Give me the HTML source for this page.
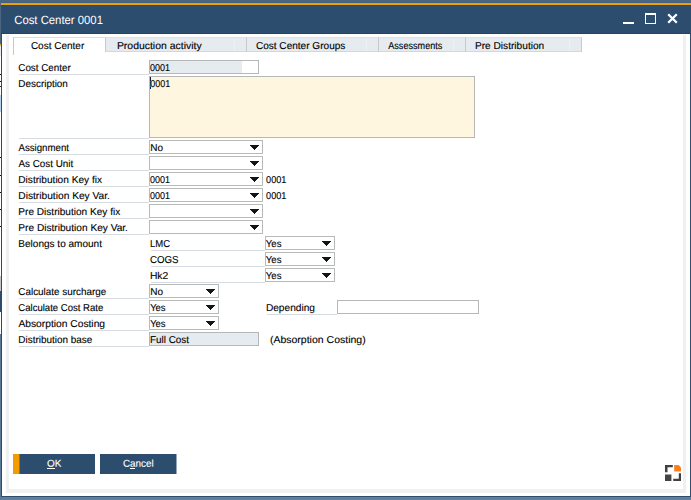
<!DOCTYPE html>
<html lang="en">
<head>
<meta charset="utf-8">
<title>Cost Center 0001</title>
<style>
html,body{margin:0;padding:0;}
body{width:691px;height:500px;overflow:hidden;position:relative;background:#fff;
 font-family:"Liberation Sans",sans-serif;font-size:10px;color:#000;}
.b{position:absolute;display:block;}
.t{position:absolute;white-space:nowrap;line-height:14px;transform-origin:0 0;-webkit-text-stroke:0.12px currentColor;}
.bg{background:linear-gradient(to bottom,#4b6681,#5f7e9d);}
.title{background:#2d4d6e;}
.in{box-sizing:border-box;border:1px solid #b4b8b8;background:#fff;}
</style>
</head>
<body>
<div class="b bg" style="left:0px;top:0px;width:691px;height:500px;"></div>
<div class="b " style="left:0px;top:0px;width:691px;height:3px;background:#4b6681"></div>
<div class="b title" style="left:1px;top:3px;width:690px;height:31px;"></div>
<div class="b " style="left:1px;top:2px;width:690px;height:1px;background:#43607f"></div>
<div class="b " style="left:1px;top:3px;width:690px;height:2px;background:#eea300"></div>
<div class="b " style="left:1px;top:5px;width:690px;height:1px;background:#27496d"></div>
<div class="b " style="left:1px;top:33px;width:690px;height:1px;background:#234564"></div>
<div class="b " style="left:1px;top:34px;width:690px;height:463px;background:#2b4c6d"></div>
<div class="b " style="left:2px;top:34px;width:688px;height:462px;background:#fff"></div>
<div class="b " style="left:6px;top:35px;width:680px;height:458px;box-sizing:border-box;border:3px solid #f0f0f0;border-top:0;border-bottom-width:4px"></div>
<div class="b " style="left:0px;top:497px;width:691px;height:3px;background:#5f7e9d"></div>
<div class="b " style="left:0px;top:0px;width:1px;height:500px;background:linear-gradient(to bottom,#4b6681 0px,#4b6681 44px,#f0b030 44px,#f0b030 46px,#e6ecf3 46px,#e6ecf3 56px,#fff 56px,#fff 74px,#111 74px,#111 75px,#fff 75px,#fff 81px,#111 81px,#111 82px,#fff 82px,#fff 86px,#333 86px,#333 87px,#fff 87px,#fff 95px,#b8d3ee 95px,#b8d3ee 112px,#fff 112px,#fff 157px,#111 157px,#111 158px,#fff 158px,#fff 175px,#111 175px,#111 176px,#fff 176px,#fff 192px,#111 192px,#111 193px,#fff 193px,#fff 209px,#111 209px,#111 210px,#fff 210px,#fff 226px,#111 226px,#111 227px,#fff 227px,#fff 276px,#c4c4c4 276px,#c4c4c4 291px,#2d4d6e 291px,#2d4d6e 312px,#fff 312px,#fff 334px,#5a7997 334px,#5a7997 500px)"></div>
<span class="t " style="left:14px;top:12px;transform:translate(0.23px,0px) scaleX(0.9434) rotate(0.03deg);font-size:12px;color:#fff;line-height:16px;-webkit-text-stroke:0;">Cost Center 0001</span>
<div class="b " style="left:623px;top:22px;width:11px;height:2px;background:#fff"></div>
<div class="b " style="left:645px;top:13px;width:11px;height:11px;box-sizing:border-box;border:1px solid #fff;border-top-width:2px"></div>
<svg class="b" style="left:666px;top:12px" width="13" height="13" viewBox="0 0 13 13"><path d="M2.2 2.2 L10.8 10.8 M10.8 2.2 L2.2 10.8" stroke="#fff" stroke-width="2.3" fill="none"/></svg>
<div class="b " style="left:13px;top:37px;width:93px;height:18px;box-sizing:border-box;border:1px solid #c9c9c9;border-top-color:#dcdcdc;border-bottom:0;border-right:0;background:#fff"></div>
<div class="b " style="left:105px;top:37px;width:1px;height:15px;background:#c9c9c9"></div>
<span class="t " style="left:30px;top:39px;transform:translate(0.89px,0px) scaleX(1.0004) rotate(0.03deg);">Cost Center</span>
<div class="b " style="left:105px;top:37px;width:142px;height:15px;box-sizing:border-box;border:1px solid #c9c9c9;border-top-color:#e0e0e0;border-bottom-color:#d6d6d6;background:#e6ebf0"></div>
<div class="b " style="left:234px;top:38px;width:1px;height:13px;background:#edf0f4"></div>
<span class="t " style="left:116px;top:39px;transform:translate(0.89px,0px) scaleX(1.0441) rotate(0.03deg);">Production activity</span>
<div class="b " style="left:246px;top:37px;width:133px;height:15px;box-sizing:border-box;border:1px solid #c9c9c9;border-top-color:#e0e0e0;border-bottom-color:#d6d6d6;background:#e6ebf0"></div>
<div class="b " style="left:366px;top:38px;width:1px;height:13px;background:#edf0f4"></div>
<span class="t " style="left:255px;top:39px;transform:translate(0.89px,0px) scaleX(1.0062) rotate(0.03deg);">Cost Center Groups</span>
<div class="b " style="left:378px;top:37px;width:88px;height:15px;box-sizing:border-box;border:1px solid #c9c9c9;border-top-color:#e0e0e0;border-bottom-color:#d6d6d6;background:#e6ebf0"></div>
<div class="b " style="left:453px;top:38px;width:1px;height:13px;background:#edf0f4"></div>
<span class="t " style="left:388px;top:39px;transform:translate(0.23px,0px) scaleX(0.9098) rotate(0.03deg);">Assessments</span>
<div class="b " style="left:465px;top:37px;width:117px;height:15px;box-sizing:border-box;border:1px solid #c9c9c9;border-top-color:#e0e0e0;border-bottom-color:#d6d6d6;background:#e6ebf0"></div>
<div class="b " style="left:569px;top:38px;width:1px;height:13px;background:#edf0f4"></div>
<span class="t " style="left:474px;top:39px;transform:translate(0.92px,0px) scaleX(1.0144) rotate(0.03deg);">Pre Distribution</span>
<span class="t " style="left:18px;top:61px;transform:translate(0.3px,0px) scaleX(0.9833) rotate(0.03deg);">Cost Center</span>
<div class="b " style="left:19px;top:74px;width:130px;height:1px;background:#d6dce2"></div>
<div class="b in" style="left:149px;top:60px;width:110px;height:14px;background:linear-gradient(to right,#e6ebf0 0,#e6ebf0 92px,#fff 92px)"></div>
<span class="t " style="left:150px;top:61px;transform:translate(0.05px,0px) scaleX(0.8986) rotate(0.03deg);">0001</span>
<span class="t " style="left:18px;top:77px;transform:translate(0.34px,0px) scaleX(0.9897) rotate(0.03deg);">Description</span>
<div class="b in" style="left:149px;top:76px;width:326px;height:62px;background:#fff6df"></div>
<div class="b " style="left:150px;top:77px;width:1px;height:12px;background:#0d1f3c"></div>
<div class="b " style="left:150px;top:81px;width:1.4px;height:6px;background:#2f7fe0;opacity:.8"></div>
<span class="t " style="left:150px;top:77px;transform:translate(0.25px,0px) scaleX(0.8986) rotate(0.03deg);">0001</span>
<div class="b " style="left:19px;top:138px;width:130px;height:1px;background:#d6dce2"></div>
<span class="t " style="left:18px;top:141px;transform:translate(0.43px,0px) scaleX(0.9673) rotate(0.03deg);">Assignment</span>
<div class="b " style="left:19px;top:154px;width:130px;height:1px;background:#d6dce2"></div>
<div class="b in" style="left:149px;top:140px;width:114px;height:14px;border-color:#b7baba"></div>
<svg class="b" style="left:250px;top:145px" width="9" height="5" viewBox="0 0 9 5"><path d="M0 0 H9 V1 H8 V2 H7 V3 H6 V4 H5 V5 H4 V4 H3 V3 H2 V2 H1 V1 H0 Z" fill="#151515"/></svg>
<span class="t " style="left:150px;top:141px;transform:translate(0.23px,0px) scaleX(1.0006) rotate(0.03deg);">No</span>
<span class="t " style="left:18px;top:157px;transform:translate(0.43px,0px) scaleX(0.9869) rotate(0.03deg);">As Cost Unit</span>
<div class="b " style="left:19px;top:170px;width:130px;height:1px;background:#d6dce2"></div>
<div class="b in" style="left:149px;top:156px;width:114px;height:14px;border-color:#b7baba"></div>
<svg class="b" style="left:250px;top:161px" width="9" height="5" viewBox="0 0 9 5"><path d="M0 0 H9 V1 H8 V2 H7 V3 H6 V4 H5 V5 H4 V4 H3 V3 H2 V2 H1 V1 H0 Z" fill="#151515"/></svg>
<span class="t " style="left:18px;top:173px;transform:translate(0.32px,0px) scaleX(1.0106) rotate(0.03deg);">Distribution Key fix</span>
<div class="b " style="left:19px;top:186px;width:130px;height:1px;background:#d6dce2"></div>
<div class="b in" style="left:149px;top:172px;width:114px;height:14px;border-color:#b7baba"></div>
<svg class="b" style="left:250px;top:177px" width="9" height="5" viewBox="0 0 9 5"><path d="M0 0 H9 V1 H8 V2 H7 V3 H6 V4 H5 V5 H4 V4 H3 V3 H2 V2 H1 V1 H0 Z" fill="#151515"/></svg>
<span class="t " style="left:150px;top:173px;transform:translate(0.05px,0px) scaleX(0.8986) rotate(0.03deg);">0001</span>
<span class="t " style="left:266px;top:173px;transform:translate(0.04px,0px) scaleX(0.9173) rotate(0.03deg);">0001</span>
<span class="t " style="left:18px;top:189px;transform:translate(0.31px,0px) scaleX(1.0194) rotate(0.03deg);">Distribution Key Var.</span>
<div class="b " style="left:19px;top:202px;width:130px;height:1px;background:#d6dce2"></div>
<div class="b in" style="left:149px;top:188px;width:114px;height:14px;border-color:#b7baba"></div>
<svg class="b" style="left:250px;top:193px" width="9" height="5" viewBox="0 0 9 5"><path d="M0 0 H9 V1 H8 V2 H7 V3 H6 V4 H5 V5 H4 V4 H3 V3 H2 V2 H1 V1 H0 Z" fill="#151515"/></svg>
<span class="t " style="left:150px;top:189px;transform:translate(0.05px,0px) scaleX(0.8986) rotate(0.03deg);">0001</span>
<span class="t " style="left:266px;top:189px;transform:translate(0.04px,0px) scaleX(0.9173) rotate(0.03deg);">0001</span>
<span class="t " style="left:18px;top:205px;transform:translate(0.32px,0px) scaleX(1.0073) rotate(0.03deg);">Pre Distribution Key fix</span>
<div class="b " style="left:19px;top:218px;width:130px;height:1px;background:#d6dce2"></div>
<div class="b in" style="left:149px;top:204px;width:114px;height:14px;border-color:#b7baba"></div>
<svg class="b" style="left:250px;top:209px" width="9" height="5" viewBox="0 0 9 5"><path d="M0 0 H9 V1 H8 V2 H7 V3 H6 V4 H5 V5 H4 V4 H3 V3 H2 V2 H1 V1 H0 Z" fill="#151515"/></svg>
<span class="t " style="left:18px;top:221px;transform:translate(0.32px,0px) scaleX(1.013) rotate(0.03deg);">Pre Distribution Key Var.</span>
<div class="b " style="left:19px;top:234px;width:130px;height:1px;background:#d6dce2"></div>
<div class="b in" style="left:149px;top:220px;width:114px;height:14px;border-color:#b7baba"></div>
<svg class="b" style="left:250px;top:225px" width="9" height="5" viewBox="0 0 9 5"><path d="M0 0 H9 V1 H8 V2 H7 V3 H6 V4 H5 V5 H4 V4 H3 V3 H2 V2 H1 V1 H0 Z" fill="#151515"/></svg>
<span class="t " style="left:18px;top:237px;transform:translate(0.33px,0px) scaleX(1.0031) rotate(0.03deg);">Belongs to amount</span>
<span class="t " style="left:149px;top:237px;transform:translate(0.97px,0px) scaleX(0.9517) rotate(0.03deg);">LMC</span>
<div class="b " style="left:151px;top:250px;width:114px;height:1px;background:#d6dce2"></div>
<div class="b in" style="left:265px;top:236px;width:70px;height:14px;border-color:#b7baba"></div>
<svg class="b" style="left:322px;top:241px" width="9" height="5" viewBox="0 0 9 5"><path d="M0 0 H9 V1 H8 V2 H7 V3 H6 V4 H5 V5 H4 V4 H3 V3 H2 V2 H1 V1 H0 Z" fill="#151515"/></svg>
<span class="t " style="left:265px;top:237px;transform:translate(0.79px,0px) scaleX(0.9609) rotate(0.03deg);">Yes</span>
<span class="t " style="left:149px;top:253px;transform:translate(0.91px,0px) scaleX(0.9691) rotate(0.03deg);">COGS</span>
<div class="b " style="left:151px;top:266px;width:114px;height:1px;background:#d6dce2"></div>
<div class="b in" style="left:265px;top:252px;width:70px;height:14px;border-color:#b7baba"></div>
<svg class="b" style="left:322px;top:257px" width="9" height="5" viewBox="0 0 9 5"><path d="M0 0 H9 V1 H8 V2 H7 V3 H6 V4 H5 V5 H4 V4 H3 V3 H2 V2 H1 V1 H0 Z" fill="#151515"/></svg>
<span class="t " style="left:265px;top:253px;transform:translate(0.79px,0px) scaleX(0.9609) rotate(0.03deg);">Yes</span>
<span class="t " style="left:149px;top:269px;transform:translate(0.91px,0px) scaleX(1.0298) rotate(0.03deg);">Hk2</span>
<div class="b " style="left:151px;top:282px;width:114px;height:1px;background:#d6dce2"></div>
<div class="b in" style="left:265px;top:268px;width:70px;height:14px;border-color:#b7baba"></div>
<svg class="b" style="left:322px;top:273px" width="9" height="5" viewBox="0 0 9 5"><path d="M0 0 H9 V1 H8 V2 H7 V3 H6 V4 H5 V5 H4 V4 H3 V3 H2 V2 H1 V1 H0 Z" fill="#151515"/></svg>
<span class="t " style="left:265px;top:269px;transform:translate(0.79px,0px) scaleX(0.9609) rotate(0.03deg);">Yes</span>
<span class="t " style="left:18px;top:285px;transform:translate(0.3px,0px) scaleX(0.9888) rotate(0.03deg);">Calculate surcharge</span>
<div class="b " style="left:19px;top:298px;width:130px;height:1px;background:#d6dce2"></div>
<div class="b in" style="left:149px;top:284px;width:70px;height:14px;border-color:#b7baba"></div>
<svg class="b" style="left:206px;top:289px" width="9" height="5" viewBox="0 0 9 5"><path d="M0 0 H9 V1 H8 V2 H7 V3 H6 V4 H5 V5 H4 V4 H3 V3 H2 V2 H1 V1 H0 Z" fill="#151515"/></svg>
<span class="t " style="left:150px;top:285px;transform:translate(0.23px,0px) scaleX(1.0006) rotate(0.03deg);">No</span>
<span class="t " style="left:18px;top:301px;transform:translate(0.31px,0px) scaleX(0.9559) rotate(0.03deg);">Calculate Cost Rate</span>
<div class="b " style="left:19px;top:314px;width:130px;height:1px;background:#d6dce2"></div>
<div class="b in" style="left:149px;top:300px;width:70px;height:14px;border-color:#b7baba"></div>
<svg class="b" style="left:206px;top:305px" width="9" height="5" viewBox="0 0 9 5"><path d="M0 0 H9 V1 H8 V2 H7 V3 H6 V4 H5 V5 H4 V4 H3 V3 H2 V2 H1 V1 H0 Z" fill="#151515"/></svg>
<span class="t " style="left:150px;top:301px;transform:translate(0.19px,0px) scaleX(0.9429) rotate(0.03deg);">Yes</span>
<span class="t " style="left:18px;top:317px;transform:translate(0.43px,0px) scaleX(1.0253) rotate(0.03deg);">Absorption Costing</span>
<div class="b " style="left:19px;top:330px;width:130px;height:1px;background:#d6dce2"></div>
<div class="b in" style="left:149px;top:316px;width:70px;height:14px;border-color:#b7baba"></div>
<svg class="b" style="left:206px;top:321px" width="9" height="5" viewBox="0 0 9 5"><path d="M0 0 H9 V1 H8 V2 H7 V3 H6 V4 H5 V5 H4 V4 H3 V3 H2 V2 H1 V1 H0 Z" fill="#151515"/></svg>
<span class="t " style="left:150px;top:317px;transform:translate(0.19px,0px) scaleX(0.9429) rotate(0.03deg);">Yes</span>
<span class="t " style="left:265px;top:301px;transform:translate(0.92px,0px) scaleX(1.0137) rotate(0.03deg);">Depending</span>
<div class="b " style="left:267px;top:314px;width:70px;height:1px;background:#d6dce2"></div>
<div class="b in" style="left:337px;top:300px;width:142px;height:14px;"></div>
<span class="t " style="left:18px;top:333px;transform:translate(0.33px,0px) scaleX(0.9936) rotate(0.03deg);">Distribution base</span>
<div class="b " style="left:19px;top:346px;width:130px;height:1px;background:#d6dce2"></div>
<div class="b in" style="left:149px;top:332px;width:110px;height:14px;background:#e6ebf0"></div>
<span class="t " style="left:149px;top:333px;transform:translate(0.94px,0px) scaleX(0.992) rotate(0.03deg);">Full Cost</span>
<span class="t " style="left:269px;top:333px;transform:translate(0.95px,0px) scaleX(1.0499) rotate(0.03deg);">(Absorption Costing)</span>
<div class="b " style="left:13px;top:454px;width:82px;height:20px;background:#2d4d6e"></div>
<div class="b " style="left:13px;top:454px;width:7px;height:20px;background:linear-gradient(to right,#f39c00 6px,#90753a 6px)"></div>
<span class="t " style="left:46px;top:457px;transform:translate(0.93px,-0.3px) scaleX(0.9955) rotate(0.03deg);color:#fff;-webkit-text-stroke:0.1px #fff;">OK</span>
<div class="b " style="left:47px;top:468px;width:8px;height:1px;background:#fff"></div>
<div class="b " style="left:100px;top:454px;width:77px;height:20px;background:linear-gradient(to right,#2d4d6e 76px,#96a6b6 76px)"></div>
<span class="t " style="left:122px;top:457px;transform:translate(0.9px,-0.3px) scaleX(0.9883) rotate(0.03deg);color:#fff;-webkit-text-stroke:0.1px #fff;">Cancel</span>
<div class="b " style="left:130px;top:468px;width:5px;height:1px;background:#fff"></div>
<svg class="b" style="left:665px;top:465px" width="16" height="16" viewBox="0 0 16 16">
<path d="M0 0 H7.8 V2.2 H2.5 V7.2 H0 Z" fill="#404040"/>
<path d="M9.2 0 H13.2 Q15.2 0.6 16 3 V6.5 H9.2 Z" fill="#f9801d"/>
<rect x="0" y="9.5" width="6.4" height="6.5" fill="#444"/>
<path d="M16 8.2 V16 H8.2 V13.7 H13.8 V8.2 Z" fill="#404040"/>
</svg>
</body>
</html>
